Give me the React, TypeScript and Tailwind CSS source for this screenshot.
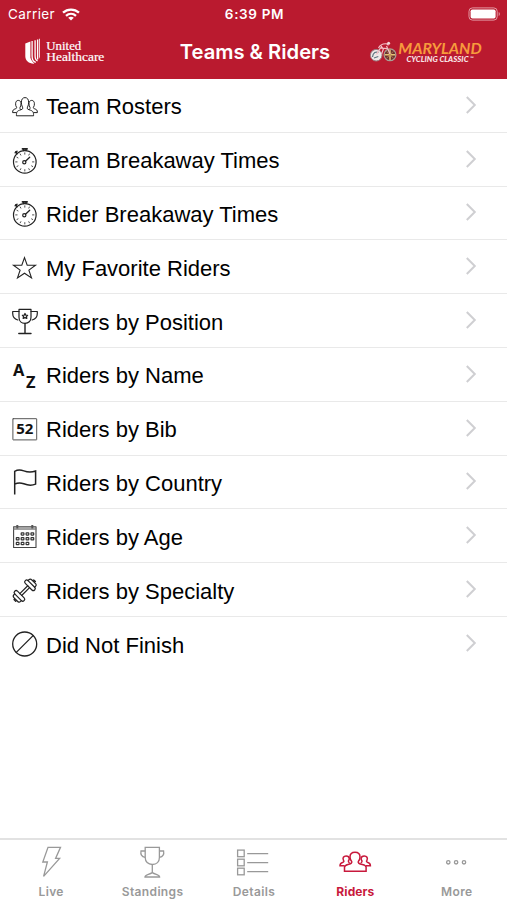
import type { ReactNode } from "react";

/* ---------- list icons (26 x 26) ---------- */

function Icon({ children, stroke = 1.2 }: { children: ReactNode; stroke?: number }) {
  return (
    <svg
      viewBox="0 0 26 26"
      className="h-[26px] w-[26px] shrink-0 overflow-visible text-[#222]"
      fill="none"
      stroke="currentColor"
      strokeWidth={stroke}
      strokeLinecap="round"
      strokeLinejoin="round"
    >
      {children}
    </svg>
  );
}

const TeamIcon = () => (
  <Icon stroke={1}>
    <path d="M4.4 21.4C4.4 17.8 5.2 17 7.6 16.2C9.6 15.5 10.9 15.3 10.8 14C10.6 13 9.4 11.6 9.4 8.2C9.4 5.2 10.8 3.6 13 3.6S16.6 5.2 16.6 8.2C16.6 11.6 15.4 13 15.2 14C15.1 15.3 16.4 15.5 18.4 16.2C20.8 17 21.6 17.8 21.6 21.4Z" />
    <path d="M4.2 18.6H.6C.6 15.8 1.6 15.5 3.2 14.9C4.4 14.4 4.8 14.2 4.6 13.4C3.8 12.2 3.6 11.2 3.6 9.8C3.6 7.6 4.7 6.4 6.3 6.4C7.9 6.4 9 7.5 9 9.8C9 11.5 8.6 12.4 8 13.4C7.8 14.3 8 14.8 8.6 15.5" />
    <path d="M21.8 18.6H25.4C25.4 15.8 24.4 15.5 22.8 14.9C21.6 14.4 21.2 14.2 21.4 13.4C22.2 12.2 22.4 11.2 22.4 9.8C22.4 7.6 21.3 6.4 19.7 6.4C18.1 6.4 17 7.5 17 9.8C17 11.5 17.4 12.4 18 13.4C18.2 14.3 18 14.8 17.4 15.5" />
  </Icon>
);

const StopwatchIcon = () => (
  <Icon stroke={1.2}>
    <circle cx="12.8" cy="13.9" r="11.3" />
    <path d="M10.4 .9H15.2M11.6 1.5V2.5M14 1.5V2.5" strokeWidth="1.6" />
    <path d="M3.2 4.8L5 3.2M3.7 3.8L5.2 5.7" strokeWidth="1.5" />
    <circle cx="12.3" cy="14.3" r="1.6" />
    <path d="M13.5 13.2L17.7 9.3" strokeWidth="1.3" />
    <path
      d="M12.8 4.8V6.2M12.8 21.6V23M3.7 13.9H5.1M20.5 13.9H21.9M8.2 6L8.8 7.1M17.4 6L16.8 7.1M4.9 9.3L6 9.9M4.9 18.5L6 17.9M20.7 18.5L19.6 17.9M8.2 21.8L8.8 20.7M17.4 21.8L16.8 20.7"
      strokeWidth=".8"
    />
  </Icon>
);

const StarIcon = () => (
  <Icon stroke={1.1}>
    <path
      strokeLinejoin="miter"
      d="M12.5 2.6L15.2 10.2H23.5L16.9 15.1L19.5 22.9L12.5 18.2L5.5 22.9L8.1 15.1L1.5 10.2H9.8Z"
    />
  </Icon>
);

const CupIcon = () => (
  <Icon stroke={1.2}>
    <path d="M7 .4H19V8.2C19 12.2 16.4 14.3 13 14.3S7 12.2 7 8.2Z" />
    <path d="M7 2.5H.7V4.4C.7 8 2.8 10 5.8 11M19 2.5H25.3V4.4C25.3 8 23.2 10 20.2 11" />
    <path d="M13 14.5V24.4M6.8 24.5H19" strokeWidth="1.4" />
    <path
      d="M13 4.5L13.8 6.2L15.6 6.3L14.4 7.6L14.8 9.4L13 8.6L11.2 9.4L11.6 7.6L10.4 6.3L12.2 6.2Z"
      strokeWidth="1.3"
    />
  </Icon>
);

const AlphaIcon = () => (
  <Icon>
    <g
      fill="#111"
      stroke="none"
      fontFamily="Noto Sans, sans-serif"
      fontWeight="700"
      fontSize="16.4"
    >
      <text x="1.1" y="13">A</text>
      <text x="14" y="24.8">Z</text>
    </g>
  </Icon>
);

const BibIcon = () => (
  <Icon>
    <rect x=".9" y="1.7" width="23.8" height="21.2" rx=".3" stroke="#555" strokeWidth="1" strokeLinejoin="miter" />
    <text
      x="12.8"
      y="17.4"
      textAnchor="middle"
      fill="#111"
      stroke="none"
      fontFamily="Noto Sans, sans-serif"
      fontWeight="700"
      fontSize="15"
    >
      52
    </text>
  </Icon>
);

const FlagIcon = () => (
  <Icon stroke={1.5}>
    <path
      strokeLinecap="butt"
      strokeLinejoin="miter"
      d="M2.7 24.6V1.3C5.5 -.2 8.3 -.3 11.8 .9C15.6 2.3 19.4 2.6 23.6 1V14.1C19.4 16 15.6 15.3 11.8 13.8C8.3 12.5 5.5 12.7 2.7 14.2"
    />
  </Icon>
);

const CalendarIcon = () => (
  <Icon stroke={1.1}>
    <rect x="1.6" y="2.8" width="22.4" height="20.7" stroke="#444" />
    <path d="M1.6 4H24M1.6 5.2H24" stroke="#777" strokeWidth="1" />
    <path d="M5.3 .9V4.5M20.3 .9V4.5" stroke="#555" strokeWidth="2" strokeLinecap="butt" />
    <g stroke="#333" strokeWidth="1.2">
      {[8.3, 13.1, 17.9].map((y, row) =>
        [4.3, 9.2, 14.1, 19].map((x, col) =>
          (row === 0 && col === 0) || (row === 2 && col === 3) ? null : (
            <rect key={`${x}-${y}`} x={x} y={y + 0.5} width="2.7" height="2.3" rx=".5" />
          )
        )
      )}
    </g>
  </Icon>
);

const DumbbellIcon = () => (
  <Icon stroke={1.2}>
    <g transform="translate(12.7 12.6) rotate(-45)">
      <path d="M-5.6 -1.3H5.6M-5.6 1.3H5.6" />
      <rect x="-9.4" y="-6.6" width="3.9" height="13.2" rx="1.9" />
      <path d="M-9.4 -4.7H-10.6C-12.4 -4.7 -12.6 -3.4 -12.6 -2.4V2.4C-12.6 3.4 -12.4 4.7 -10.6 4.7H-9.4M-12.6 -1.2H-14V1.2H-12.6" />
      <rect x="5.5" y="-6.6" width="3.9" height="13.2" rx="1.9" />
      <path d="M9.4 -4.7H10.6C12.4 -4.7 12.6 -3.4 12.6 -2.4V2.4C12.6 3.4 12.4 4.7 10.6 4.7H9.4M12.6 -1.2H14V1.2H12.6" />
    </g>
  </Icon>
);

const NoneIcon = () => (
  <Icon stroke={1.3}>
    <circle cx="12.7" cy="12" r="12" />
    <path d="M4.3 20.4L21.1 3.6" />
  </Icon>
);

const ROWS = [
  { label: "Team Rosters", icon: TeamIcon },
  { label: "Team Breakaway Times", icon: StopwatchIcon },
  { label: "Rider Breakaway Times", icon: StopwatchIcon },
  { label: "My Favorite Riders", icon: StarIcon },
  { label: "Riders by Position", icon: CupIcon },
  { label: "Riders by Name", icon: AlphaIcon },
  { label: "Riders by Bib", icon: BibIcon },
  { label: "Riders by Country", icon: FlagIcon },
  { label: "Riders by Age", icon: CalendarIcon },
  { label: "Riders by Specialty", icon: DumbbellIcon },
  { label: "Did Not Finish", icon: NoneIcon },
];

/* ---------- tab bar icons (34 x 34) ---------- */

const TABS = [
  {
    label: "Live",
    art: <path d="M14 3.3H26.5L21.6 14.4H25.6L9.6 32.4L13.4 18H8.8Z" strokeLinejoin="miter" />,
  },
  {
    label: "Standings",
    art: (
      <>
        <path d="M10.2 3.3H24.4V13.5C24.4 17.6 21.6 20.5 17.3 20.5S10.2 17.6 10.2 13.5Z" />
        <path d="M10.2 7H6C5.4 10.2 6.4 12.8 10.2 13.4M24.4 7H28.6C29.2 10.2 28.2 12.8 24.4 13.4" />
        <path d="M17.3 20.5V28.6M10 33C10 30.5 14 30.8 17.3 28.6C20.6 30.8 24.6 30.5 24.6 33Z" />
      </>
    ),
  },
  {
    label: "Details",
    art: (
      <>
        <rect x="1.6" y="6.1" width="6.6" height="6.6" />
        <rect x="1.6" y="15.2" width="6.6" height="6.6" />
        <rect x="1.6" y="24.2" width="6.6" height="6.6" />
        <path d="M11.2 9.6H32.2M11.2 18.6H32.2M11.2 27.6H32.2" />
      </>
    ),
  },
  {
    label: "Riders",
    active: true,
    art: (
      <g strokeWidth="1.5">
        <path d="M6.5 27.2V23.2C6.5 21 8.6 20.8 10.8 20.2C13.2 19.6 14.1 18.8 13.7 17.6C12.5 16.3 12 14.8 12 13.1C12 10.1 13.8 8.3 17 8.3S22 10.1 22 13.1C22 14.8 21.5 16.3 20.3 17.6C19.9 18.8 20.8 19.6 23.2 20.2C25.4 20.8 28.1 21 28.1 23.2V27.2Z" />
        <path d="M6.6 21.7H2C2 19.2 3.1 18.8 5 18.2C6.1 17.8 6.1 17.2 5.5 16.4C4.3 14 5.6 11.9 8.1 11.9C10.2 11.9 11.2 13 11.3 14.6C11.3 15.7 10.7 16.5 10.4 17.1C10.2 18 10.8 18.4 11.6 18.9" />
        <path d="M28 21.7H32.4C32.4 19.2 31.3 18.8 29.4 18.2C28.3 17.8 28.3 17.2 28.9 16.4C30.1 14 28.8 11.9 26.3 11.9C24.2 11.9 23.2 13 23.1 14.6C23.1 15.7 23.7 16.5 24 17.1C24.2 18 23.6 18.4 22.8 18.9" />
      </g>
    ),
  },
  {
    label: "More",
    art: (
      <>
        <circle cx="9.3" cy="18.3" r="1.7" />
        <circle cx="17.1" cy="18.3" r="1.7" />
        <circle cx="25" cy="18.3" r="1.7" />
      </>
    ),
  },
];

function StatusBar() {
  return (
    <div className="grid h-[27px] grid-cols-[1fr_auto_1fr] items-center pl-[8px] pr-[6px] pt-px text-[13.5px] font-['Inter',sans-serif]">
      <div className="flex items-center gap-[7px]">
        <span className="tracking-[0.4px]">Carrier</span>
        <svg viewBox="0 0 18 13" className="h-[13px] w-[18px]" fill="none" stroke="white" strokeWidth="2.3">
          <path d="M1 4.7C5.6 .5 12.4 .5 17 4.7M4 7.8C6.9 5.2 11.1 5.2 14 7.8" />
          <path d="M6.2 9.7C7.9 8.3 10.1 8.3 11.8 9.7L9 12.6Z" fill="white" stroke="none" />
        </svg>
      </div>
      <div className="text-center font-semibold tracking-[0.65px]">6:39 PM</div>
      <svg viewBox="0 0 33 14" className="mb-px h-[14px] w-[33px] justify-self-end">
        <rect x="1" y=".9" width="28.2" height="12.2" rx="3.4" fill="none" stroke="#e39aa4" strokeWidth="1" />
        <rect x="2.6" y="2.4" width="25" height="9.2" rx="1.8" fill="white" />
        <path d="M30.7 5V9C32.2 8.3 32.2 5.7 30.7 5Z" fill="#e39aa4" />
      </svg>
    </div>
  );
}

function UnitedLogo() {
  return (
    <svg viewBox="0 0 84 28" className="h-7 w-[84px]">
      <path d="M.3 5.4L5.4 3.6V19.7C6 22 7.4 23.6 9.4 25.6C4.2 26 .3 22.6 .3 18.2Z" fill="white" />
      <path
        d="M7.1 3V18C7.1 21.4 8.6 23.8 10.8 24.4M10.1 2.2V18C10.1 20.4 11.4 22.4 12.6 22.8M12.6 1.4V21.4"
        fill="none"
        stroke="white"
        strokeWidth="1.3"
      />
      <path d="M13.9 .8H15V19L13.9 21Z" fill="#f4cfd3" />
      <g fill="white" fontFamily="'Liberation Serif', serif" fontSize="12" stroke="white" strokeWidth=".2">
        <text x="21.3" y="12.4" textLength="35" lengthAdjust="spacingAndGlyphs">United</text>
        <text x="21.3" y="23.4" textLength="58" lengthAdjust="spacingAndGlyphs">Healthcare</text>
      </g>
    </svg>
  );
}

function MarylandLogo() {
  return (
    <svg viewBox="0 0 116 26" className="h-[26px] w-[116px]">
      {/* rider and bicycle */}
      <circle cx="7.2" cy="16.2" r="5.8" fill="#eee8e8" stroke="#9b7a80" strokeWidth="1" />
      <path d="M3.5 18C4 13.5 7 12.3 9.5 13.5M5 19L9.3 17.5" stroke="#5d7580" strokeWidth="1.2" fill="none" />
      <circle cx="21" cy="15.8" r="5.9" fill="#6b3231" stroke="#a9a096" strokeWidth="1.2" />
      <path d="M21 10.6V21M15.8 15.8H26.2" stroke="#e5c375" strokeWidth="1.5" />
      <path d="M17.4 12.2L24.6 19.4M24.6 12.2L17.4 19.4" stroke="#b98550" strokeWidth=".8" />
      <path
        d="M9.5 9C11 5.9 14 4.4 17.8 4.8L19.5 6.4M12 6.9L14.3 10.2L12.5 15.4M17.5 6.9L21 14.9M7.5 15.4L11.5 8.9L18 9.6"
        stroke="#f3bfc6"
        strokeWidth="1.2"
        fill="none"
      />
      <circle cx="19.6" cy="4.3" r="1.5" fill="#f3d8da" />
      <text
        x="29.2"
        y="15.4"
        fill="#f79a3c"
        fontFamily="Lato, sans-serif"
        fontStyle="italic"
        fontWeight="700"
        fontSize="16"
        textLength="83.5"
        lengthAdjust="spacingAndGlyphs"
      >
        MARYLAND
      </text>
      <g fill="#f8e3e5" fontFamily="Lato, sans-serif" fontStyle="italic" fontWeight="900">
        <text x="37.5" y="22.8" fontSize="7.6" textLength="62" lengthAdjust="spacingAndGlyphs">
          CYCLING CLASSIC
        </text>
        <text x="101" y="20.6" fontSize="5">™</text>
      </g>
    </svg>
  );
}

export default function App() {
  return (
    <div className="flex h-[900px] w-[507px] flex-col overflow-hidden bg-white font-['Liberation_Sans',Arial,sans-serif]">
      <header className="h-[79px] shrink-0 bg-[#ba1a2f] text-white">
        <StatusBar />
        <div className="grid h-[50px] grid-cols-[1fr_auto_1fr] items-center pl-[25px] pr-[22px]">
          <UnitedLogo />
          <h1 className="pt-px font-['Inter',sans-serif] text-[20.2px] font-semibold">Teams &amp; Riders</h1>
          <div className="justify-self-end">
            <MarylandLogo />
          </div>
        </div>
      </header>

      <main className="flex-1">
        {ROWS.map(({ label, icon: RowIcon }, i) => (
          <div
            key={label}
            className={`flex h-[53.8px] items-center pl-3 pr-[30px] pt-[3px] ${
              i < ROWS.length - 1 ? "border-b border-[#e9e9e9]" : ""
            }`}
          >
            <RowIcon />
            <span className="ml-2 flex-1 pt-px text-[22px] leading-none text-black">{label}</span>
            <svg
              viewBox="0 0 12 20"
              className="mb-[4px] h-5 w-3"
              fill="none"
              stroke="#cfcfd2"
              strokeWidth="2"
            >
              <path d="M1.8 2L9.8 10L1.8 18" />
            </svg>
          </div>
        ))}
      </main>

      <nav className="grid h-[62px] shrink-0 grid-cols-5 border-t-2 border-[#e2e2e2]">
        {TABS.map(({ label, art, active }) => (
          <div
            key={label}
            className={`flex flex-col items-center pt-[4px] ${active ? "text-[#c8193c]" : "text-[#999]"}`}
          >
            <svg
              viewBox="0 0 34 34"
              className="h-[34px] w-[34px] overflow-visible"
              fill="none"
              stroke="currentColor"
              strokeWidth="1.3"
            >
              {art}
            </svg>
            <span
              className={`mt-[6px] pl-px font-['Inter',sans-serif] text-[12px] leading-[16px] ${
                active ? "font-bold tracking-[0.1px]" : "font-semibold tracking-[0.35px]"
              }`}
            >
              {label}
            </span>
          </div>
        ))}
      </nav>
    </div>
  );
}
